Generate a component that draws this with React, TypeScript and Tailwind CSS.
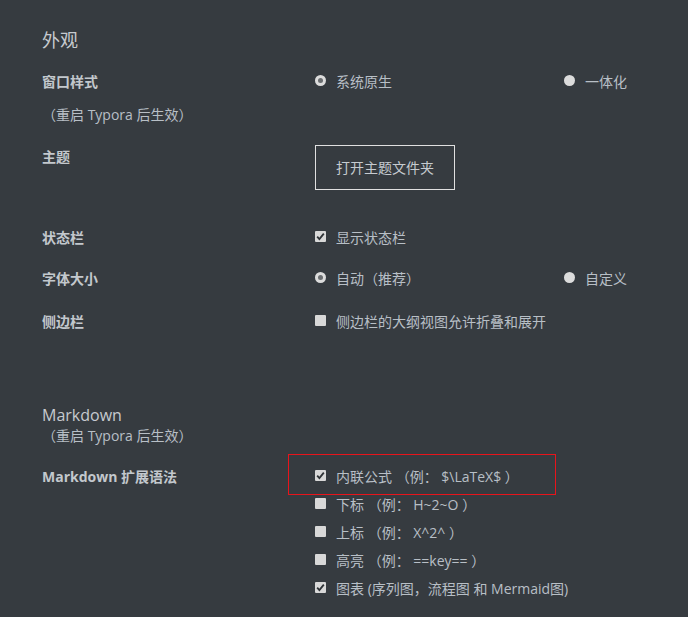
import React from "react";

const font = {
  fontFamily: '"Open Sans", "Noto Sans CJK SC", sans-serif',
};

function Radio({ checked }: { checked: boolean }) {
  return (
    <span className="mt-[-4px] inline-flex h-[11px] w-[11px] shrink-0 items-center justify-center rounded-full bg-[#dcdcdc]">
      {checked && <span className="h-[5px] w-[5px] rounded-full bg-[#6a6d70]" />}
    </span>
  );
}

function Check({ checked }: { checked: boolean }) {
  return (
    <span className="mt-[-4px] inline-flex h-[11px] w-[11px] shrink-0 items-center justify-center rounded-[1px] bg-[#d8d8d8]">
      {checked && (
        <svg width="9" height="9" viewBox="0 0 9 9">
          <path d="M1.2 4.6 L3.4 7 L7.8 1.6" fill="none" stroke="#2e3236" strokeWidth="1.8" />
        </svg>
      )}
    </span>
  );
}

function Option({ kind, checked, label }: { kind: "radio" | "check"; checked: boolean; label: string }) {
  return (
    <div className="flex items-center gap-[10px] leading-[20px]">
      {kind === "radio" ? <Radio checked={checked} /> : <Check checked={checked} />}
      <span>{label}</span>
    </div>
  );
}

function Row({ label, children, className = "" }: { label: string; children: React.ReactNode; className?: string }) {
  return (
    <div className={"flex leading-[20px] " + className}>
      <div className="w-[273px] shrink-0 font-bold text-[#c3c8cd]">{label}</div>
      <div className="flex-1">{children}</div>
    </div>
  );
}

const mdOptions = [
  { label: "下标 （例： H~2~O ）", checked: false },
  { label: "上标 （例： X^2^ ）", checked: false },
  { label: "高亮 （例： ==key== ）", checked: false },
  { label: "图表 (序列图，流程图 和 Mermaid图)", checked: true },
];

export default function App() {
  return (
    <div className="h-[617px] w-[688px] overflow-hidden bg-[#363b40] pl-[42px] text-[14px] text-[#b8bfc6]" style={font}>
      <div className="pt-[28px] text-[18px] leading-[24px] text-[#c6cacf]">外观</div>

      <Row label="窗口样式" className="mt-[20px]">
        <div className="flex">
          <div className="w-[249px]">
            <Option kind="radio" checked label="系统原生" />
          </div>
          <Option kind="radio" checked={false} label="一体化" />
        </div>
      </Row>
      <div className="mt-[13px] leading-[20px]">（重启 Typora 后生效）</div>

      <div className="mt-[20px] flex items-start">
        <div className="w-[273px] shrink-0 pt-[2px] font-bold leading-[20px] text-[#c3c8cd]">主题</div>
        <button className="flex h-[45px] w-[140px] items-center justify-center border border-[#e0e0e0] text-[14px] text-[#c6cbd0]">
          打开主题文件夹
        </button>
      </div>

      <Row label="状态栏" className="mt-[38px]">
        <Option kind="check" checked label="显示状态栏" />
      </Row>

      <Row label="字体大小" className="mt-[21px]">
        <div className="flex">
          <div className="w-[249px]">
            <Option kind="radio" checked label="自动（推荐）" />
          </div>
          <Option kind="radio" checked={false} label="自定义" />
        </div>
      </Row>

      <Row label="侧边栏" className="mt-[23px]">
        <Option kind="check" checked={false} label="侧边栏的大纲视图允许折叠和展开" />
      </Row>

      <div className="mt-[72px] text-[16px] leading-[22px] text-[#c6cacf]">Markdown</div>
      <div className="leading-[20px]">（重启 Typora 后生效）</div>

      <div className="mt-[17px] flex items-start">
        <div className="w-[273px] shrink-0 pt-[4px] font-bold leading-[20px] text-[#c3c8cd]">Markdown 扩展语法</div>
        <div className="flex-1">
          <div className="relative flex h-[28px] items-center">
            <Option kind="check" checked label="内联公式 （例： $\LaTeX$ ）" />
            <div className="absolute left-[-27px] top-[-9px] h-[41px] w-[268px] border border-[#e8141b]" />
          </div>
          {mdOptions.map((o) => (
            <div key={o.label} className="flex h-[28px] items-center">
              <Option kind="check" checked={o.checked} label={o.label} />
            </div>
          ))}
        </div>
      </div>
    </div>
  );
}
